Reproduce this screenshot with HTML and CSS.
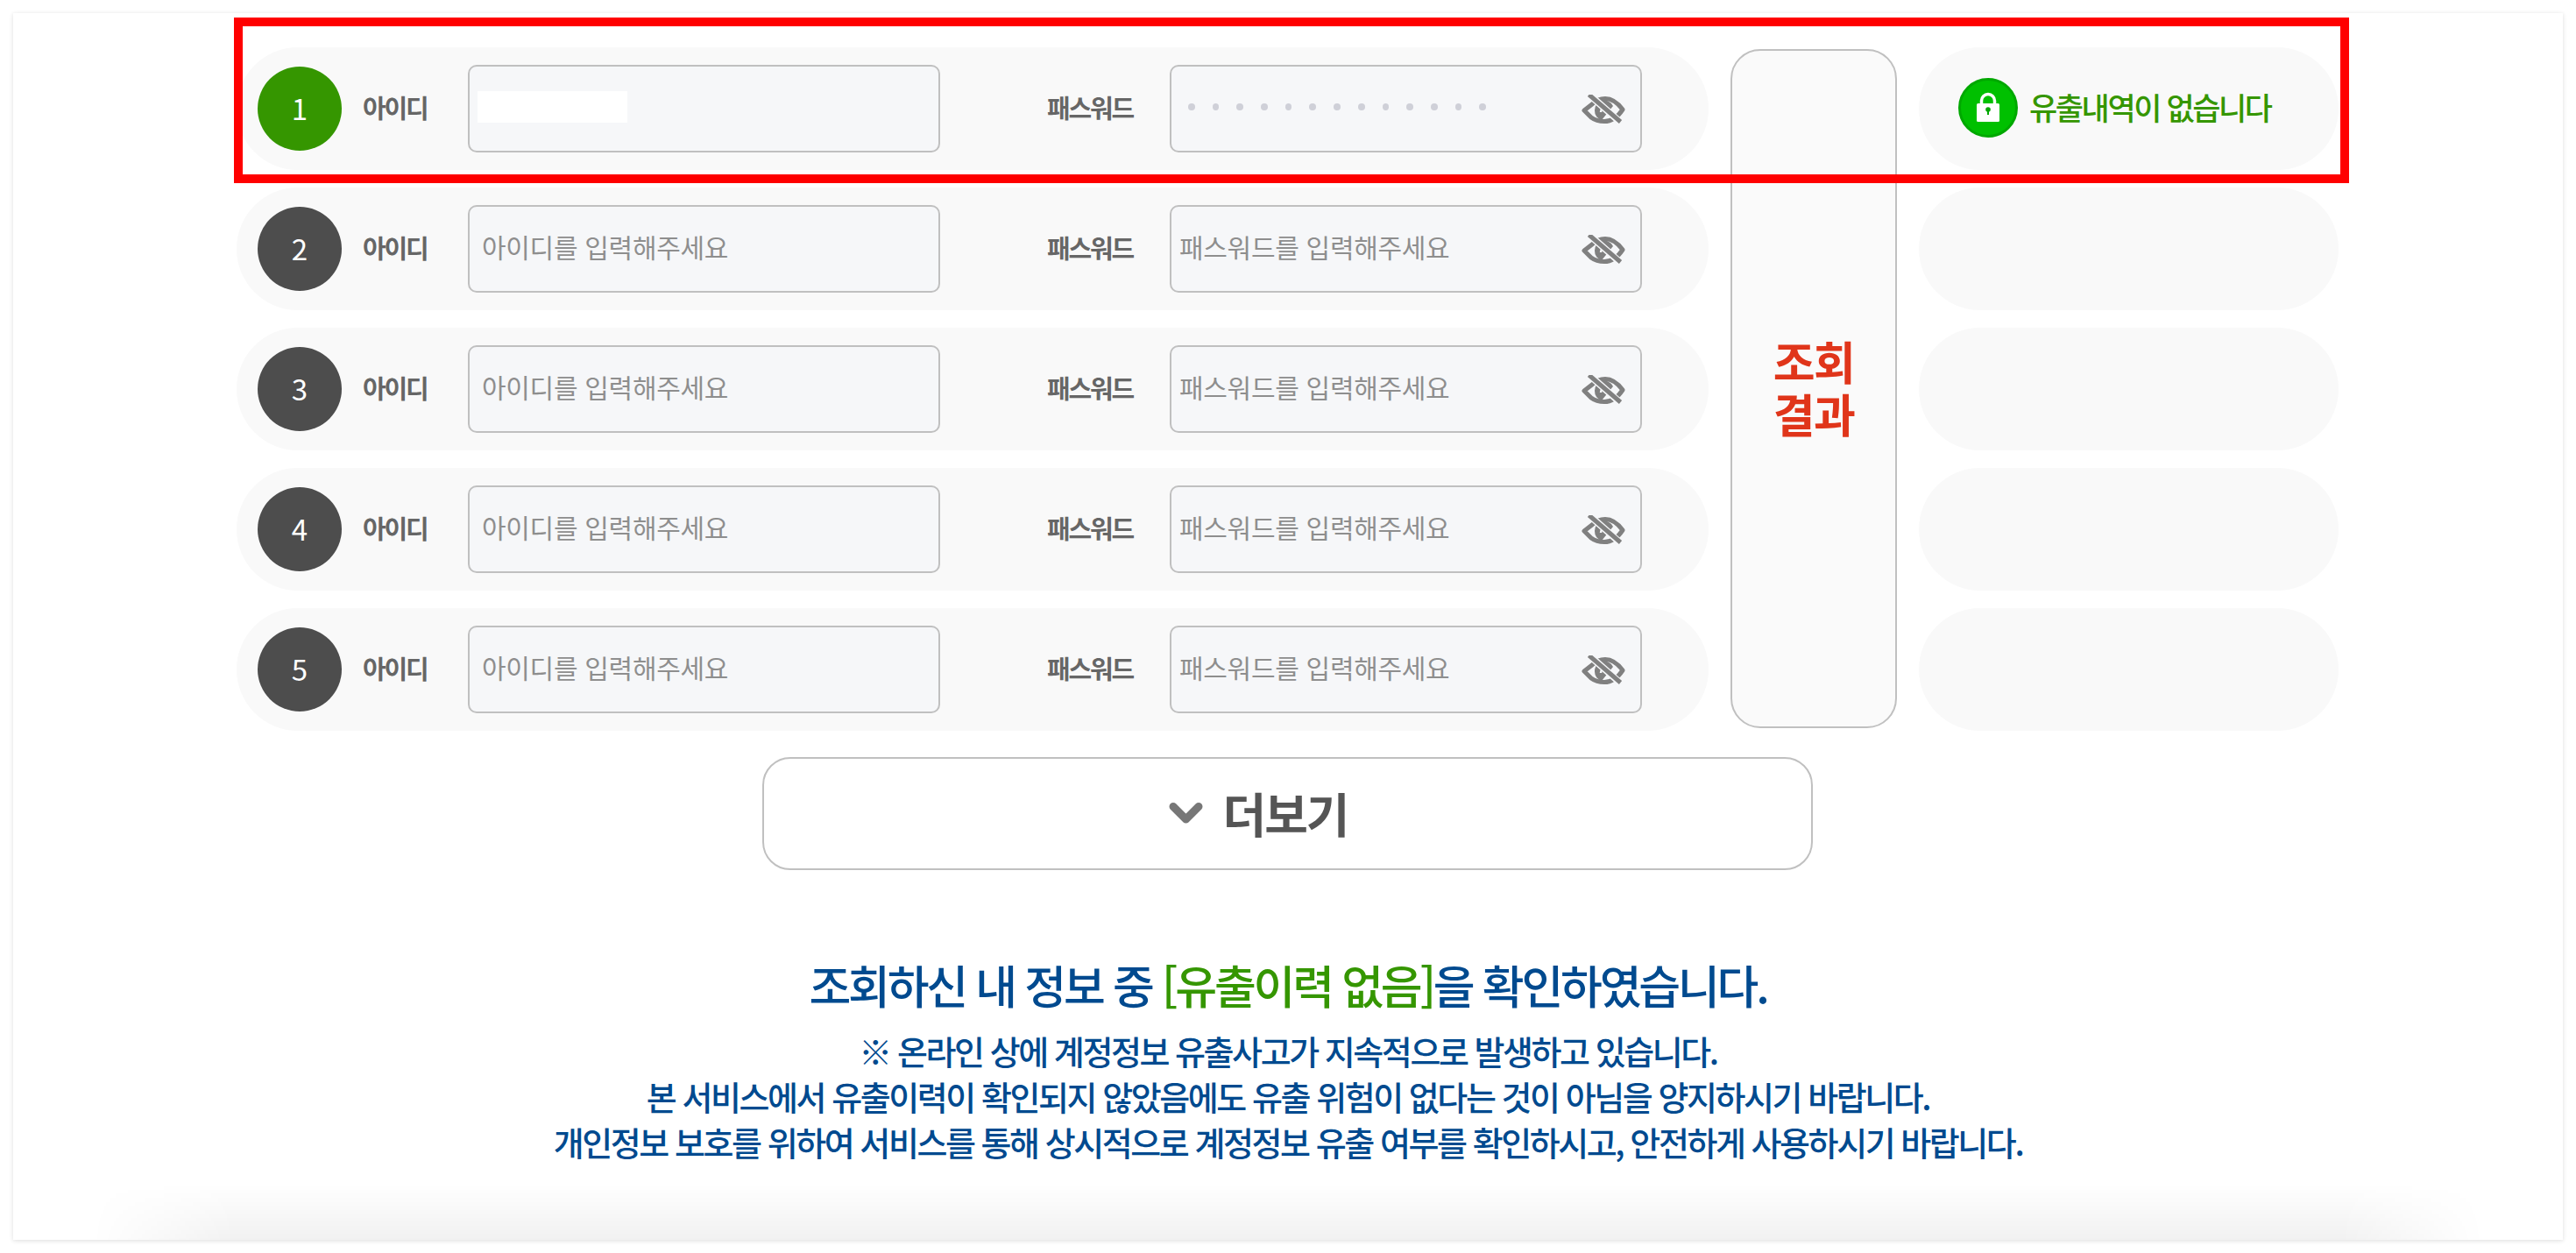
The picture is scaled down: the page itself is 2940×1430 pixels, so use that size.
FILE: index.html
```html
<!DOCTYPE html>
<html lang="ko">
<head>
<meta charset="utf-8">
<title>유출 조회</title>
<link rel="stylesheet" href="styles.css">
</head>
<body>
<svg class="defs" width="0" height="0" aria-hidden="true">
  <symbol id="eye" viewBox="0 0 50 34">
    <path d="M3 18 L12 11 C17 6 22 4.500 27 4.500 C34 4.500 41 9 47 17 C41 26 33 30.500 26 30.500 C20 30.500 15 29 11 26 Z" fill="none" stroke="#808080" stroke-width="5" stroke-linejoin="round"/>
    <path d="M15 18 A11 11 0 0 1 36 13 L23 29 A11 11 0 0 1 15 18 Z" fill="#808080"/>
    <path d="M22 20 A5 5 0 0 1 28 15" fill="none" stroke="#f6f7f9" stroke-width="2.500"/>
    <path d="M10 1 L46 33" stroke="#f6f7f9" stroke-width="8"/>
    <path d="M8.500 0 L44.500 31" stroke="#808080" stroke-width="5"/>
  </symbol>
</svg>
<main class="card">
  <div class="highlight"></div>
  <section class="board">
    <div class="row">
      <span class="num num-on">1</span>
      <label class="label label-id">아이디</label>
      <div class="field"><span class="mask"></span></div>
      <label class="label label-pw">패스워드</label>
      <div class="field field-pw">
        <span class="dots"><i></i><i></i><i></i><i></i><i></i><i></i><i></i><i></i><i></i><i></i><i></i><i></i><i></i></span>
        <svg class="eye"><use href="#eye"/></svg>
      </div>
    </div>
    <div class="result-btn"><span>조회<br>결과</span></div>
    <div class="status">
      <svg class="lock" viewBox="0 0 68 68">
        <circle cx="34" cy="34" r="32.500" fill="#00c000" stroke="#00a800" stroke-width="3"/>
        <path d="M26.500 32 V26 A7.500 7.500 0 0 1 41.500 26 V32" fill="none" stroke="#fff" stroke-width="3.500"/>
        <rect x="21" y="29" width="26" height="21" rx="1.500" fill="#fff"/>
        <circle cx="34" cy="36" r="2.800" fill="#00a800"/>
        <rect x="33" y="36" width="2" height="6" fill="#00a800"/>
      </svg>
      <span class="status-text">유출내역이 없습니다</span>
    </div>

    <div class="row">
      <span class="num">2</span>
      <label class="label label-id">아이디</label>
      <input class="field" placeholder="아이디를 입력해주세요">
      <label class="label label-pw">패스워드</label>
      <div class="field field-pw">
        <input class="inner" placeholder="패스워드를 입력해주세요">
        <svg class="eye"><use href="#eye"/></svg>
      </div>
    </div>
    <div class="status"></div>

    <div class="row">
      <span class="num">3</span>
      <label class="label label-id">아이디</label>
      <input class="field" placeholder="아이디를 입력해주세요">
      <label class="label label-pw">패스워드</label>
      <div class="field field-pw">
        <input class="inner" placeholder="패스워드를 입력해주세요">
        <svg class="eye"><use href="#eye"/></svg>
      </div>
    </div>
    <div class="status"></div>

    <div class="row">
      <span class="num">4</span>
      <label class="label label-id">아이디</label>
      <input class="field" placeholder="아이디를 입력해주세요">
      <label class="label label-pw">패스워드</label>
      <div class="field field-pw">
        <input class="inner" placeholder="패스워드를 입력해주세요">
        <svg class="eye"><use href="#eye"/></svg>
      </div>
    </div>
    <div class="status"></div>

    <div class="row">
      <span class="num">5</span>
      <label class="label label-id">아이디</label>
      <input class="field" placeholder="아이디를 입력해주세요">
      <label class="label label-pw">패스워드</label>
      <div class="field field-pw">
        <input class="inner" placeholder="패스워드를 입력해주세요">
        <svg class="eye"><use href="#eye"/></svg>
      </div>
    </div>
    <div class="status"></div>
  </section>

  <button class="more">
    <svg class="chev" viewBox="0 0 39 26"><path d="M5 5.500 L19.500 20 L34 5.500" fill="none" stroke="#777" stroke-width="9" stroke-linecap="round" stroke-linejoin="round"/></svg>
    <span>더보기</span>
  </button>

  <section class="notice">
    <h2 class="notice-title">조회하신 내 정보 중 <em>[유출이력 없음]</em>을 확인하였습니다.</h2>
    <p class="notice-text">※ 온라인 상에 계정정보 유출사고가 지속적으로 발생하고 있습니다.<br>본 서비스에서 유출이력이 확인되지 않았음에도 유출 위험이 없다는 것이 아님을 양지하시기 바랍니다.<br>개인정보 보호를 위하여 서비스를 통해 상시적으로 계정정보 유출 여부를 확인하시고, 안전하게 사용하시기 바랍니다.</p>
  </section>
  <div class="bottom-shade"></div>
</main>
</body>
</html>
```
FILE: styles.css
```css
* { box-sizing: border-box; }
html, body { margin: 0; padding: 0; background: #fff; }
body { padding: 15px; height: 1430px; overflow: hidden; font-family: "Noto Sans CJK KR", "Noto Sans", sans-serif; }
.defs { position: absolute; }
.card {
  position: relative;
  height: 1400px;
  padding: 39px 0 0 255px;
  background: #fff;
  box-shadow: 0 1px 5px rgba(0,0,0,.14);
}
.highlight {
  position: absolute;
  left: 252px; top: 5px;
  width: 2414px; height: 189px;
  border: 10px solid #f00;
  z-index: 3;
  pointer-events: none;
}
.board {
  display: grid;
  grid-template-columns: 1680px 190px 479px;
  grid-auto-rows: 140px;
  column-gap: 25px;
  row-gap: 20px;
  width: 2400px;
}
.row {
  grid-column: 1;
  display: flex;
  align-items: center;
  padding-left: 24px;
  background: #f9f9f9;
  border-radius: 70px;
}
.num {
  flex: none;
  width: 96px; height: 96px;
  padding-bottom: 2px;
  border-radius: 50%;
  background: #4d4d4d;
  color: #fff;
  font-size: 33px;
  font-weight: 400;
  display: flex; align-items: center; justify-content: center;
}
.num-on { background: #359600; }
.label {
  flex: none;
  margin-top: -5px;
  font-size: 29px;
  font-weight: 700;
  color: #666;
  letter-spacing: -2.200px;
  white-space: nowrap;
}
.label-id { width: 120px; margin-left: 24px; }
.label-pw { width: 100px; margin-left: 120px; margin-right: 42px; text-align: right; }
.field {
  flex: none;
  width: 539px; height: 100px;
  border: 2px solid #c0c0c0;
  border-radius: 10px;
  background: #f6f7f9;
  padding: 0 0 6px 14px;
  font: 400 30px "Noto Sans CJK KR", sans-serif;
  letter-spacing: -.3px;
  color: #555;
  outline: none;
  display: flex;
  align-items: center;
}
input.field::placeholder, .inner::placeholder { color: #8e8e8e; opacity: 1; }
.mask { display: block; width: 171px; height: 36px; margin: 2px 0 0 -5px; background: #fff; }
.field-pw { padding: 0 17px 0 9px; justify-content: space-between; }
.inner {
  flex: 1;
  min-width: 0;
  margin-top: -6px;
  border: 0;
  background: transparent;
  padding: 0;
  font: 400 30px "Noto Sans CJK KR", sans-serif;
  letter-spacing: -.3px;
  outline: none;
}
.dots { display: flex; gap: 20px; margin: -4px 0 0 10px; }
.dots i { display: block; width: 7.700px; height: 8px; border-radius: 50%; background: #cfd0d8; }
.eye { flex: none; width: 50px; height: 34px; margin-top: 2px; }
.result-btn {
  grid-column: 2;
  grid-row: 1 / span 5;
  margin: 2px 0 3px;
  border: 2px solid #c0c0c0;
  border-radius: 34px;
  background: #fafafa;
  display: flex; align-items: center; justify-content: center;
  text-align: center;
  font-size: 52px;
  font-weight: 700;
  line-height: 60px;
  letter-spacing: -1.500px;
  color: #e0351a;
}
.result-btn span { margin-top: -3px; }
.status {
  grid-column: 3;
  display: flex;
  align-items: center;
  padding-left: 45px;
  gap: 13px;
  background: #f9f9f9;
  border-radius: 70px;
}
.lock { flex: none; width: 68px; height: 68px; margin-top: -2px; }
.status-text { font-size: 35px; font-weight: 500; color: #359600; letter-spacing: -2.400px; white-space: nowrap; margin-top: -6px; }
.more {
  display: flex;
  align-items: center;
  justify-content: center;
  gap: 22px;
  width: 1199px;
  height: 129px;
  margin: 30px 0 0 600px;
  padding: 0 66px 2px 0;
  border: 2px solid #c0c0c0;
  border-radius: 32px;
  background: #fff;
  font: 700 54px "Noto Sans CJK KR", sans-serif;
  color: #555;
  letter-spacing: -2px;
}
.chev { flex: none; width: 39px; height: 26px; }
.notice { width: 2400px; padding-top: 95px; text-align: center; }
.notice-title { margin: 0; font-size: 52px; font-weight: 500; line-height: 72px; color: #004a8f; letter-spacing: -3.200px; }
.notice-title em { font-style: normal; color: #359600; }
.notice-text { margin: 13px 0 0; font-size: 38px; font-weight: 500; line-height: 52px; color: #004a8f; letter-spacing: -2.450px; }
.bottom-shade {
  position: absolute;
  left: 90px; right: 90px; bottom: 0;
  height: 64px;
  background: linear-gradient(to bottom, rgba(0,0,0,0), rgba(0,0,0,.055));
  -webkit-mask-image: linear-gradient(to right, transparent, #000 6%, #000 94%, transparent);
  mask-image: linear-gradient(to right, transparent, #000 6%, #000 94%, transparent);
}
```
